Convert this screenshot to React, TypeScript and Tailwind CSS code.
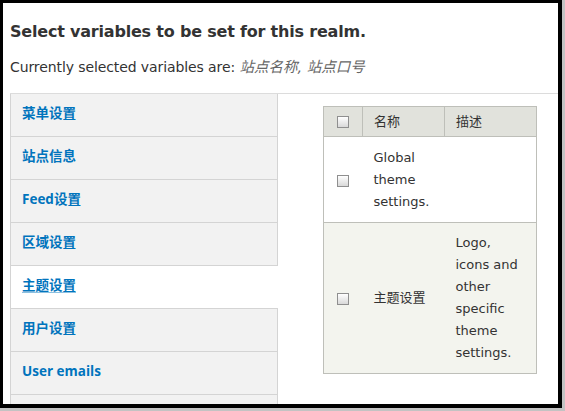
import React from 'react';

const FONT = "font-['DejaVu_Sans','Noto_Sans_CJK_SC',sans-serif]";

const tabs = ['菜单设置', '站点信息', 'Feed设置', '区域设置', '主题设置', '用户设置', 'User emails', ''];
const ACTIVE = '主题设置';

const Checkbox: React.FC = () => (
  <span className="inline-block w-[12px] h-[12px] border border-[#8f8f8f] bg-gradient-to-b from-[#ffffff] to-[#d9d9d9] align-middle" />
);

const App: React.FC = () => {
  return (
    <div className={`w-[565px] h-[411px] bg-[#c3c3c3] ${FONT}`}>
      <div className="w-[562px] h-[408px] bg-black pl-[3px] pt-[3px]">
        <div className="w-[555px] h-[401px] bg-white overflow-hidden pl-[7px] text-[#333]">
          <h2 className="pt-[19px] text-[16px] leading-[20px] font-bold tracking-[-0.2px] text-[#333]">
            Select variables to be set for this realm.
          </h2>
          <p className="mt-[15px] text-[14px] leading-[20px]">
            <span className="tracking-[-0.1px]">Currently selected variables are:</span>{' '}
            <em className="italic text-[14.5px] text-[#666]">站点名称, 站点口号</em>
          </p>

          {/* vertical tabs */}
          <div className="mt-[16px] border-t border-[#dcdcdc] flex">
            <ul className="w-[268px] shrink-0">
              {tabs.map((t, i) => {
                const active = t === ACTIVE;
                return (
                  <li
                    key={i}
                    className={`h-[43px] border-b border-l border-[#d4d4d4] flex items-center pl-[11px] pb-[3px] ${
                      active ? 'bg-white border-r-white' : 'bg-[#f2f2f2] border-r'
                    }`}
                  >
                    <a
                      href="#"
                      className={`font-['Open_Sans','Noto_Sans_CJK_SC',sans-serif] text-[13.5px] font-bold text-[#0074bd] ${
                        active ? 'underline decoration-[#8cc0e0] underline-offset-2' : 'no-underline'
                      }`}
                    >
                      {t}
                    </a>
                  </li>
                );
              })}
            </ul>

            <div className="pl-[45px] pt-[12px]">
              <table className="table-fixed border-collapse w-[213px] text-[13px] leading-[22px] text-[#333]">
                <colgroup>
                  <col className="w-[39px]" />
                  <col className="w-[82px]" />
                  <col className="w-[92px]" />
                </colgroup>
                <thead>
                  <tr className="bg-[#e1e2dc] h-[30px]">
                    <th className="border border-[#bebfb9] text-center font-normal">
                      <Checkbox />
                    </th>
                    <th className="border border-[#bebfb9] text-left font-normal pl-[11px]">名称</th>
                    <th className="border border-[#bebfb9] text-left font-normal pl-[11px]">描述</th>
                  </tr>
                </thead>
                <tbody>
                  <tr className="bg-white">
                    <td className="border-l border-b border-[#bebfb9] text-center pt-[10px] pb-[9px]">
                      <Checkbox />
                    </td>
                    <td className="border-b border-[#bebfb9] pl-[11px] pt-[10px] pb-[9px]">Global theme settings.</td>
                    <td className="border-r border-b border-[#bebfb9] pl-[11px] pt-[10px] pb-[9px]"></td>
                  </tr>
                  <tr className="bg-[#f3f4ee]">
                    <td className="border-l border-b border-[#bebfb9] text-center pt-[9px] pb-[9px]">
                      <Checkbox />
                    </td>
                    <td className="border-b border-[#bebfb9] pl-[11px] pt-[9px] pb-[9px]">主题设置</td>
                    <td className="border-r border-b border-[#bebfb9] pl-[11px] pr-[8px] pt-[9px] pb-[9px]">
                      Logo, icons and other specific theme settings.
                    </td>
                  </tr>
                </tbody>
              </table>
            </div>
          </div>
        </div>
      </div>
    </div>
  );
};

export default App;
